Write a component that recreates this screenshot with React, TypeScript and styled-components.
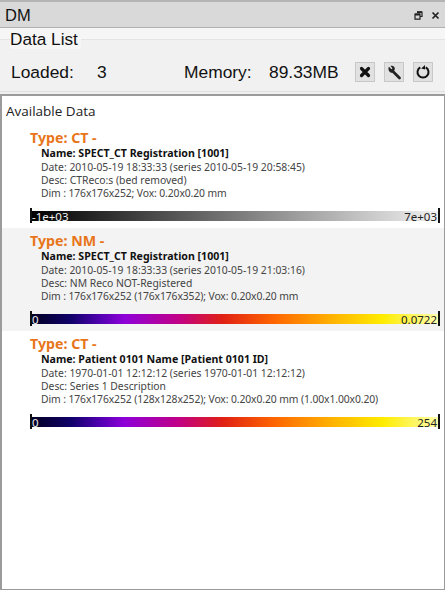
import React from 'react'
import styled, { createGlobalStyle } from 'styled-components'

const datasets = [
  {
    type: 'CT',
    name: 'SPECT_CT Registration [1001]',
    date: '2010-05-19 18:33:33 (series 2010-05-19 20:58:45)',
    desc: 'CTReco:s (bed removed)',
    dim: '176x176x252; Vox: 0.20x0.20 mm',
    min: '-1e+03',
    max: '7e+03',
    scale: 'gray',
  },
  {
    type: 'NM',
    name: 'SPECT_CT Registration [1001]',
    date: '2010-05-19 18:33:33 (series 2010-05-19 21:03:16)',
    desc: 'NM Reco NOT-Registered',
    dim: '176x176x252 (176x176x352); Vox: 0.20x0.20 mm',
    min: '0',
    max: '0.0722',
    scale: 'hot',
  },
  {
    type: 'CT',
    name: 'Patient 0101 Name [Patient 0101 ID]',
    date: '1970-01-01 12:12:12 (series 1970-01-01 12:12:12)',
    desc: 'Series 1 Description',
    dim: '176x176x252 (128x128x252); Vox: 0.20x0.20 mm (1.00x1.00x0.20)',
    min: '0',
    max: '254',
    scale: 'hot',
  },
]

const App = () => (
  <>
    <GlobalStyle />
    <Window>
      <TitleBar>
        <Title>DM</Title>
        <TitleIcons>
          <svg width='9' height='9' viewBox='0 0 9 9'>
            <path d='M3 1h5v4.500h-1.500M1 3.200h5v5h-5z' fill='none' stroke='#222' strokeWidth='1.200' />
            <path d='M3 1.200h5M1 3.500h5' stroke='#222' strokeWidth='1.800' />
          </svg>
          <svg width='9' height='9' viewBox='0 0 9 9'>
            <path d='M1.500 1.500l6 6M7.500 1.500l-6 6' stroke='#222' strokeWidth='1.700' />
          </svg>
        </TitleIcons>
      </TitleBar>
      <Group>
        <GroupTitle>Data List</GroupTitle>
        <StatusRow>
          <StatusLabel>Loaded:</StatusLabel>
          <LoadedValue>3</LoadedValue>
          <MemoryLabel>Memory:</MemoryLabel>
          <MemoryValue>89.33MB</MemoryValue>
          <ToolButton>
            <svg width='12' height='12' viewBox='0 0 12 12'>
              <path d='M2.500 2.500l7 7M9.500 2.500l-7 7' stroke='#111' strokeWidth='3.200' strokeLinecap='round' />
            </svg>
          </ToolButton>
          <ToolButton>
            <svg width='15' height='15' viewBox='0 0 15 15'>
              <path d='M6 6.500l6.500 6.500' stroke='#222' strokeWidth='2.800' strokeLinecap='round' />
              <path d='M2 1.800l2.500 2.400 1-1-2-2.200c1.800-.7 4-.2 4.300 2.400.1.900-.2 1.700-.7 2.400l-2 2C3.500 8 1 6 1.500 2.800z' fill='#222' />
            </svg>
          </ToolButton>
          <ToolButton>
            <svg width='16' height='16' viewBox='0 0 16 16'>
              <path d='M5.300 3.300a5.500 5.500 0 1 0 5.400 0' fill='none' stroke='#111' strokeWidth='2' />
              <path d='M10 1v4.600l-3.800-1.200z' fill='#111' />
            </svg>
          </ToolButton>
        </StatusRow>
      </Group>
      <ListPanel>
        <ListHeading>Available Data</ListHeading>
        {datasets.map( ( item, index ) =>
          <Item key={`dataset-${index}`} $shaded={index === 1}>
            <TypeLine>Type: {item.type} -</TypeLine>
            <NameLine>Name: {item.name}</NameLine>
            <InfoLine>Date: {item.date}</InfoLine>
            <InfoLine>Desc: {item.desc}</InfoLine>
            <DimLine>Dim : {item.dim}</DimLine>
            <ScaleBar $scale={item.scale}>
              <MinLabel>{item.min}</MinLabel>
              <span>{item.max}</span>
            </ScaleBar>
          </Item>
        )}
      </ListPanel>
    </Window>
  </>
)

const GlobalStyle = createGlobalStyle`
  html, body {
    margin: 0;
    padding: 0;
    background: #f0f0f0;
    font-family: "Liberation Sans", Arial, sans-serif;
  }
`

const Window = styled.div`
  width: 445px;
  height: 590px;
  display: flex;
  flex-direction: column;
  overflow: hidden;
  box-sizing: border-box;
  background: #f0f0f0;
`

const TitleBar = styled.div`
  height: 28px;
  flex: none;
  box-sizing: border-box;
  display: flex;
  align-items: center;
  justify-content: space-between;
  padding: 2px 5px 0 5px;
  background: #d9d9d9;
  border-top: 2px solid #b4b4b4;
  border-bottom: 1px solid #b0b0b0;
`

const Title = styled.div`
  font-size: 16.500px;
  color: #111;
`

const TitleIcons = styled.div`
  display: flex;
  align-items: center;
  gap: 8px;
`

const Group = styled.div`
  height: 64px;
  flex: none;
  margin-bottom: 2px;
  box-sizing: border-box;
  padding-left: 10px;
  background: linear-gradient( #f6f6f6 0, #f6f6f6 11px, #e4e4e4 11px, #e4e4e4 12px, #f1f1f1 12px );
  border-bottom: 1px solid #e0e0e0;
`

const GroupTitle = styled.div`
  font-size: 17.200px;
  line-height: 20px;
  padding-top: 1px;
  color: #111;
  width: fit-content;
  padding-right: 3px;
  background: #f6f6f6;
`

const StatusRow = styled.div`
  display: flex;
  align-items: center;
  height: 28px;
  margin-top: 9px;
  font-size: 17.400px;
  color: #111;
`

const StatusLabel = styled.span`
  padding-left: 1px;
  width: 86px;
`

const LoadedValue = styled.span`
  width: 87px;
`

const MemoryLabel = styled.span`
  width: 85px;
`

const MemoryValue = styled.span`
  width: 86px;
`

const ToolButton = styled.button`
  width: 20px;
  height: 20px;
  flex: none;
  margin-right: 9px;
  padding: 0;
  display: flex;
  align-items: center;
  justify-content: center;
  background: #e1e1e1;
  border: 1px solid #c8c8c8;
`

const ListPanel = styled.div`
  flex: 1;
  min-height: 0;
  box-sizing: border-box;
  background: #fff;
  border: 1px solid #9b9b9b;
  border-top-width: 2px;
  border-left-width: 2px;
`

const ListHeading = styled.div`
  font-family: "Open Sans", sans-serif;
  font-size: 13.500px;
  line-height: 18px;
  padding: 6px 0 0 4px;
  color: #222;
  height: 29px;
  box-sizing: border-box;
`

const Item = styled.div<{ $shaded: boolean }>`
  padding: 5px 4px 0 28px;
  height: 103px;
  box-sizing: border-box;
  background: ${ p => p.$shaded ? '#f3f3f3' : '#fff' };
`

const TypeLine = styled.div`
  font-family: "Noto Sans", sans-serif;
  font-weight: bold;
  font-size: 14.200px;
  line-height: 16px;
  color: #e8751a;
`

const NameLine = styled.div`
  font-family: "Noto Sans", sans-serif;
  font-weight: bold;
  font-size: 10.600px;
  line-height: 14px;
  margin: 0 0 1px 11px;
  color: #111;
`

const InfoLine = styled.div`
  font-family: "Noto Sans", sans-serif;
  font-size: 10.350px;
  line-height: 13px;
  margin-left: 11px;
  color: #444;
`

const DimLine = styled( InfoLine )`
  letter-spacing: -0.1px;
`

const scales: Record<string, string> = {
  gray: 'linear-gradient( 90deg, #000, #f2f2f2 )',
  hot: 'linear-gradient( 90deg, #000020 0, #10006a 10%, #5000b0 17%, #8e00d8 23%, #c00088 36%, #e02014 47%, #ff6800 60%, #ffb400 74%, #ffec00 86%, #ffffb0 100% )',
}

const ScaleBar = styled.div<{ $scale: string }>`
  position: relative;
  height: 10px;
  margin-top: 11px;
  padding: 0 3px 0 2px;
  display: flex;
  justify-content: space-between;
  align-items: center;
  font-family: "Noto Sans", sans-serif;
  font-size: 11.500px;
  color: #222;
  background: ${ p => scales[p.$scale] };
  &::before, &::after {
    content: '';
    position: absolute;
    top: -3px;
    width: 2px;
    height: 15px;
    background: #111;
  }
  &::before { left: 0; }
  &::after { right: 0; }
`

const MinLabel = styled.span`
  color: #f0f0f0;
`

export default App
